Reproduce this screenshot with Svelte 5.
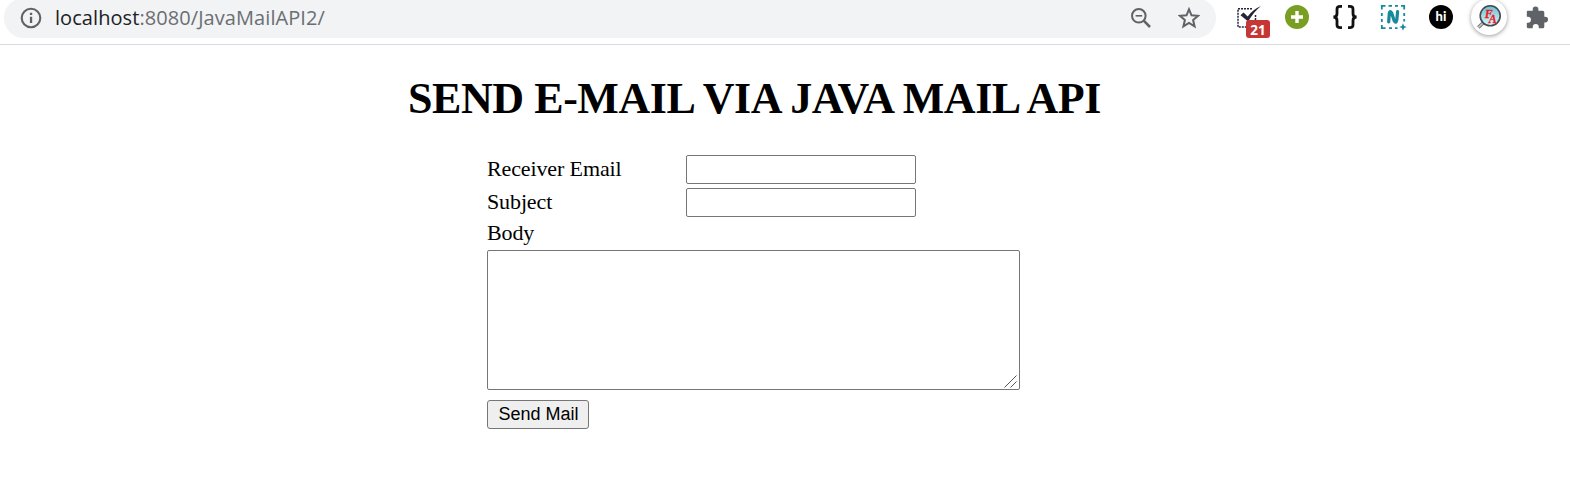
<script>
  let receiver = $state('');
  let subject = $state('');
  let body = $state('');
</script>

<header class="toolbar">
  <div class="address">
    <svg class="info" width="22" height="22" viewBox="0 0 22 22">
      <circle cx="11" cy="11" r="9.3" fill="none" stroke="#5f6368" stroke-width="2.1" />
      <path d="M9.9 5.8h2.3v2.2H9.9zM9.9 9.8h2.3v6.2H9.9z" fill="#5f6368" />
    </svg>
    <div class="url"><span class="host">localhost</span>:8080/JavaMailAPI2/</div>
    <svg class="zoom" width="22" height="22" viewBox="0 0 22 22" fill="none" stroke="#5f6368">
      <circle cx="8.8" cy="8.8" r="6.8" stroke-width="2" />
      <path d="M5.6 8.8h6.6" stroke-width="1.6" />
      <path d="M13.7 13.7l6.3 6.3" stroke-width="2.5" />
    </svg>
    <svg class="star" width="22" height="22" viewBox="0 0 22 22">
      <path d="M11 2.3l2.5 6 6.5.55-4.9 4.25 1.5 6.3-5.6-3.4-5.6 3.4 1.5-6.3L2 8.85l6.5-.55z" fill="none" stroke="#5f6368" stroke-width="2" />
    </svg>
  </div>
  <div class="extensions">
    <div class="ext tasks">
      <svg width="28" height="28" viewBox="0 0 28 28" fill="none" stroke="#25243a">
        <path d="M17 5.8H3V24H11M20.5 12v5" stroke-width="1.5" stroke-dasharray="2 1" />
        <path d="M5.5 12.3l3-2.8 4.2 4.1Q17.5 6.5 26 3 18.5 9 13.2 18.5z" fill="#25243a" stroke="none" />
      </svg>
      <span class="badge">21</span>
    </div>
    <svg class="ext" width="28" height="28" viewBox="0 0 28 28">
      <circle cx="14" cy="14" r="12" fill="#799f22" />
      <path d="M14 8v12M8 14h12" stroke="#fff" stroke-width="3.4" />
    </svg>
    <svg class="ext" width="28" height="28" viewBox="0 0 28 28" fill="none" stroke="#111" stroke-width="2.8">
      <path d="M11 3.3H9.3Q6 3.3 6 6v4.4Q6 14 2.4 14q3.6 0 3.6 3.6V22q0 2.7 3.3 2.7H11M17 3.3h1.7Q22 3.3 22 6v4.4q0 3.6 3.6 3.6-3.6 0-3.6 3.6V22q0 2.7-3.3 2.7H17" />
    </svg>
    <svg class="ext" width="28" height="28" viewBox="0 0 28 28" fill="none" stroke="#16899b">
      <path d="M2.8 6.5V2.8h3.7M9.5 2.8h3.5M16 2.8h3M22 2.8h3.2v3.7M2.8 10v3M2.8 16v3M2.8 22v3.2h3.7M10 25.2h3M16 25.2h2.5M25.2 10v3M25.2 16v2.5" stroke-width="1.8" />
      <path d="M9.7 18.8L10.3 10.3Q10.8 7 12.6 9.8L15.2 17.8Q17 21 17.8 17L18.6 8.6" stroke-width="3.2" stroke-linecap="round" />
      <path d="M24 20.2l1.1 2.7 2.7 1.1-2.7 1.1L24 27.8l-1.1-2.7-2.7-1.1 2.7-1.1z" fill="#16899b" stroke="none" />
    </svg>
    <div class="ext hi"><span>hi</span></div>
    <div class="ext finder">
      <svg width="36" height="36" viewBox="0 0 36 36">
        <defs><linearGradient id="lens" x2="0" y2="1"><stop stop-color="#69bfd2" /><stop offset="1" stop-color="#e1f4f7" /></linearGradient></defs>
        <path d="M12.5 23.5l-5.2 5" stroke="#777" stroke-width="3.6" />
        <path d="M12.5 23.5l-5.2 5" stroke="#ccc" stroke-width="1.5" />
        <circle cx="19.2" cy="16.8" r="10" fill="url(#lens)" stroke="#414b50" stroke-width="1.6" />
        <text x="13.7" y="18.5" class="lens-letter">F</text>
        <text x="17.8" y="24" class="lens-letter">A</text>
      </svg>
    </div>
    <svg class="ext" width="28" height="28" viewBox="0 0 28 28">
      <path transform="translate(1 .8) scale(.94)" d="M4 7.5h5.3V6a3 3 0 0 1 6 0v1.5h4.5q1.8 0 1.8 1.8v4.5h1a3 3 0 0 1 0 6h-1v4.5q0 1.8-1.8 1.8h-4.1v-1.5a3.2 3.2 0 0 0-6.4 0v1.5H4.7Q3 26.1 3 24.3v-4.2h1.2a3.2 3.2 0 0 0 0-6.4H3V8.5q0-1 1-1z" fill="#5f6368" />
    </svg>
  </div>
</header>

<main>
  <h1>SEND E-MAIL VIA JAVA MAIL API</h1>
  <form onsubmit={(event) => event.preventDefault()}>
    <div class="row">
      <label for="receiver">Receiver Email</label>
      <input id="receiver" type="text" bind:value={receiver} />
    </div>
    <div class="row">
      <label for="subject">Subject</label>
      <input id="subject" type="text" bind:value={subject} />
    </div>
    <label class="body-label" for="body">Body</label>
    <div class="editor">
      <textarea id="body" bind:value={body}></textarea>
      <svg class="grip" width="13" height="13" viewBox="0 0 13 13"><path d="M.5 12.5l12-12M6.5 12.5l6-6" stroke="#555" /></svg>
    </div>
    <button type="submit">Send Mail</button>
  </form>
</main>

<style>
  :global(body) { background: #fff; overflow: hidden; }
  .toolbar {
    display: flex;
    height: 44px;
    border-bottom: 1px solid #d8dadd;
    padding-left: 4px;
  }
  .address {
    box-sizing: border-box;
    display: flex;
    align-items: center;
    width: 1212px;
    height: 40px;
    margin-top: -2px;
    padding: 0 16px;
    border-radius: 20px;
    background: #f1f3f4;
  }
  .info { margin-top: -1px; }
  .url {
    flex: 1;
    margin: 0 0 0 13px;
    font: 20px/28px "Open Sans", sans-serif;
    letter-spacing: 0.07px;
    color: #6b6e72;
  }
  .host { color: #202124; }
  .zoom { margin: -1px 26px 0 0; }
  .star { margin-top: -1px; }
  .extensions {
    display: flex;
    gap: 20px;
    padding: 3px 0 0 19px;
  }
  .ext { flex: none; width: 28px; height: 28px; }
  .tasks { position: relative; }
  .tasks svg { display: block; }
  .badge {
    position: absolute;
    left: 11px;
    top: 17px;
    width: 24px;
    height: 18px;
    border-radius: 3px;
    background: #c53634;
    color: #fff;
    font: 700 13.5px/20px "Open Sans", sans-serif;
    text-align: center;
  }
  .hi {
    display: grid;
    place-items: center;
  }
  .hi span {
    width: 24px;
    height: 24px;
    border-radius: 50%;
    background: #000;
    color: #fff;
    font: 900 13px/23px Lato, sans-serif;
    text-align: center;
  }
  .finder svg {
    display: block;
    margin: -4px;
    border-radius: 50%;
    background: #fff;
    box-shadow: 0 1px 4px #0006;
  }
  .lens-letter {
    font: italic 700 12px "Liberation Serif", serif;
    fill: #ee1c25;
    stroke: #ee1c25;
    stroke-width: 0.3px;
  }
  main {
    padding: 29px 0 0;
    font-family: "Liberation Serif", serif;
    color: #000;
  }
  h1 {
    margin: 0 0 0 408px;
    font-size: 44px;
    line-height: 50px;
    letter-spacing: -0.43px;
    white-space: nowrap;
  }
  form {
    display: flex;
    flex-direction: column;
    align-items: flex-start;
    margin: 31px 0 0 487px;
    font-size: 22px;
    letter-spacing: -0.12px;
  }
  .row {
    display: grid;
    grid-template-columns: 199px 230px;
    margin-bottom: 4px;
    line-height: 28px;
  }
  input, textarea {
    box-sizing: border-box;
    margin: 0;
    border: 1px solid #767676;
    border-radius: 2px;
    background: #fff;
  }
  input { height: 29px; padding: 1px 2px; }
  .body-label { height: 29px; line-height: 23px; }
  .editor { display: grid; width: 533px; height: 140px; }
  textarea { grid-area: 1 / 1; width: 100%; height: 100%; resize: none; }
  .grip { grid-area: 1 / 1; place-self: end; margin: 0 3px 2px 0; pointer-events: none; }
  button {
    box-sizing: border-box;
    width: 102px;
    height: 29px;
    margin: 10px 0 0;
    padding: 0 0 1px 1px;
    border: 1px solid #767676;
    border-radius: 3px;
    background: #efefef;
    color: #000;
    font: 18px/25px "Liberation Sans", sans-serif;
  }
</style>
